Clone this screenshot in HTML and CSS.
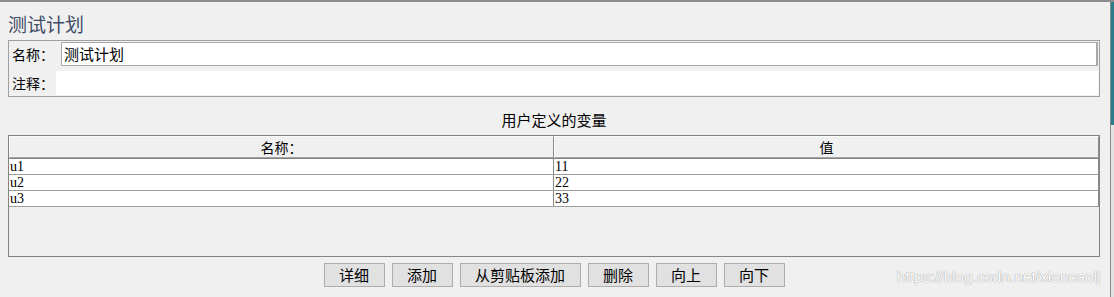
FILE: index.html
```html
<!DOCTYPE html>
<html lang="zh-CN">
<head>
    <meta charset="UTF-8" />
    <meta name="viewport" content="width=device-width, initial-scale=1.0" />
    <title>测试计划</title>
    <link rel="stylesheet" href="styles.css">
</head>
<body>
    <div class="frame">
        <div class="main">
            <h1 class="title">测试计划</h1>

            <div class="info">
                <div class="info-row">
                    <span class="info-label">名称：</span>
                    <div class="field">测试计划</div>
                </div>
                <div class="info-row info-row-comment">
                    <span class="info-label info-label-short">注释：</span>
                    <div class="field field-plain"></div>
                </div>
            </div>

            <div class="vars-caption">用户定义的变量</div>

            <div class="grid">
                <div class="grid-head">
                    <div class="hcell">名称：</div>
                    <div class="hcell">值</div>
                </div>
                <div class="grid-row">
                    <div class="cell">u1</div>
                    <div class="cell">11</div>
                </div>
                <div class="grid-row">
                    <div class="cell">u2</div>
                    <div class="cell">22</div>
                </div>
                <div class="grid-row">
                    <div class="cell">u3</div>
                    <div class="cell">33</div>
                </div>
            </div>

            <div class="buttons">
                <button class="btn">详细</button>
                <button class="btn">添加</button>
                <button class="btn btn-wide">从剪贴板添加</button>
                <button class="btn">删除</button>
                <button class="btn">向上</button>
                <button class="btn">向下</button>
            </div>

            <div class="watermark">https://blog.csdn.net/xiancaolj</div>
        </div>
        <div class="edge"></div>
    </div>
</body>
</html>
```

FILE: styles.css
```css
body {
    margin: 0;
    background-color: #f0f0f0;
    font-family: "Noto Sans CJK SC", "Liberation Sans", sans-serif;
    color: #000;
}
.frame {
    display: flex;
    height: 297px;
    border-top: 2px solid #8c8c8c;
    box-sizing: border-box;
    overflow: hidden;
}
.main {
    position: relative;
    width: 1110px;
    padding: 0 10px 0 8px;
    box-sizing: border-box;
}
.edge {
    width: 3px;
    border-left: 1px solid #8a8a8a;
    background: linear-gradient(#2c7d8c 0, #2c7d8c 123px, #e2e2e2 123px);
}
.title {
    margin: 0;
    padding-top: 8px;
    height: 30px;
    font-size: 19px;
    line-height: 28px;
    font-weight: normal;
    color: #3f4d66;
}
.info {
    border: 1px solid #a0a0a0;
    padding: 1px;
}
.info-row {
    display: flex;
    height: 24px;
}
.info-row-comment {
    margin-top: 5px;
}
.info-label {
    width: 51px;
    padding-left: 2px;
    box-sizing: border-box;
    font-size: 14px;
    line-height: 24px;
}
.info-label-short {
    width: 46px;
}
.field {
    flex-grow: 1;
    background-color: #fff;
    border: 1px solid #a8a8a8;
    border-right-width: 2px;
    padding-left: 2px;
    font-size: 15px;
    line-height: 22px;
}
.field-plain {
    border: none;
}
.vars-caption {
    margin-top: 13px;
    text-align: center;
    font-size: 15px;
    line-height: 20px;
}
.grid {
    margin-top: 5px;
    height: 120px;
    border: 1px solid #848484;
}
.grid-head, .grid-row {
    display: grid;
    grid-template-columns: 545px 1fr;
}
.hcell {
    height: 20px;
    text-align: center;
    font-size: 14px;
    line-height: 20px;
    border-top: 1px solid #fafafa;
    border-left: 1px solid #fafafa;
    border-right: 1px solid #8a8a8a;
    border-bottom: 1px solid #a6a6a6;
    box-shadow: 0 1px 0 #808080;
}
.grid-head {
    margin-bottom: 1px;
}
.grid-row {
    background-color: #fff;
    border-bottom: 1px solid #9c9c9c;
    border-right: 1px solid #8a8a8a;
}
.cell {
    height: 15px;
    padding-left: 1px;
    font-family: "Liberation Serif", serif;
    font-size: 14px;
    line-height: 16px;
    border-right: 1px solid #8a8a8a;
}
.cell:last-child {
    border-right: none;
}
.buttons {
    display: flex;
    justify-content: center;
    gap: 7px;
    margin-top: 6px;
}
.btn {
    width: 61px;
    height: 24px;
    padding: 0;
    background-color: #e1e1e1;
    border: 1px solid #adadad;
    font-family: "Noto Sans CJK SC", sans-serif;
    font-size: 15px;
    line-height: 20px;
    color: #000;
}
.btn-wide {
    width: 121px;
}
.watermark {
    position: absolute;
    left: 897px;
    top: 266px;
    font-family: "Liberation Sans", Arial, sans-serif;
    font-size: 15.5px;
    color: #fcfcfc;
    text-shadow: 0 0 1px #9a9a9a, 0 0 1px #b0b0b0;
}
```
